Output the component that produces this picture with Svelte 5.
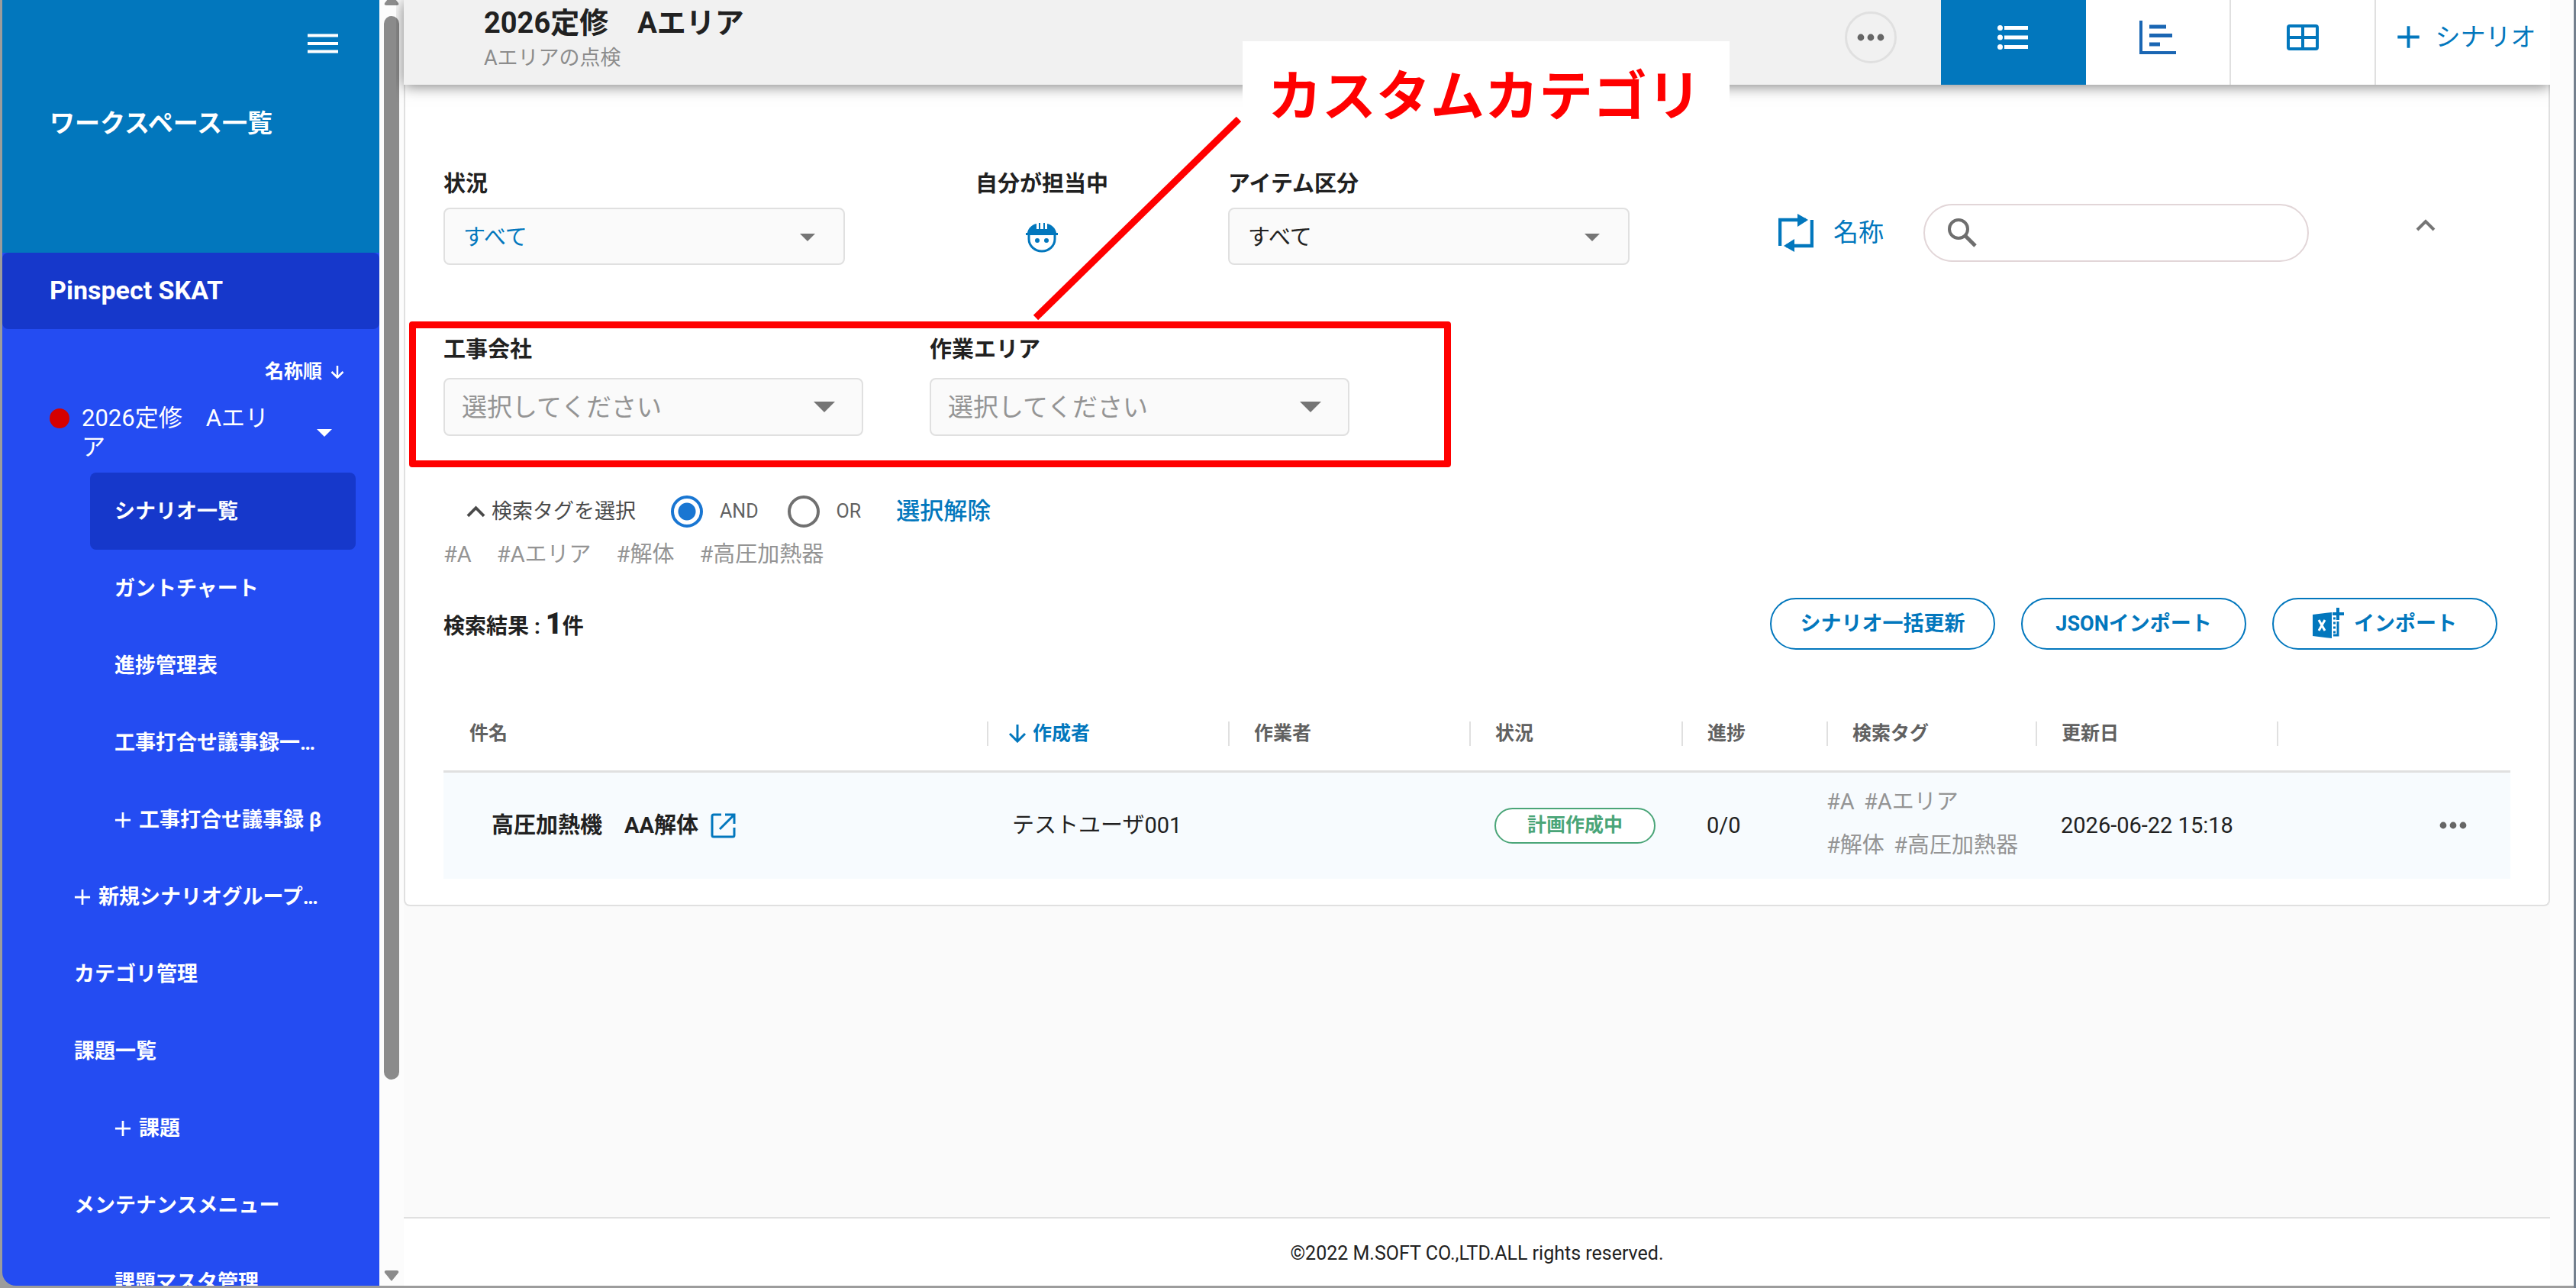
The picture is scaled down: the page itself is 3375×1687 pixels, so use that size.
<script>
  /** Sidebar entries below the selected scenario group */
  const menuItems = [
    { label: 'シナリオ一覧', level: 2, active: true },
    { label: 'ガントチャート', level: 2 },
    { label: '進捗管理表', level: 2 },
    { label: '工事打合せ議事録一…', level: 2 },
    { label: '工事打合せ議事録 β', level: 2, add: true },
    { label: '新規シナリオグループ…', level: 1, add: true },
    { label: 'カテゴリ管理', level: 1 },
    { label: '課題一覧', level: 1 },
    { label: '課題', level: 2, add: true },
    { label: 'メンテナンスメニュー', level: 1 },
    { label: '課題マスタ管理', level: 2 },
  ];

  const customCategories = [
    { id: 'company', label: '工事会社' },
    { id: 'area', label: '作業エリア' },
  ];

  const tags = ['#A', '#Aエリア', '#解体', '#高圧加熱器'];

  const rows = [
    {
      name: '高圧加熱機　AA解体',
      author: 'テストユーザ001',
      worker: '',
      status: '計画作成中',
      progress: '0/0',
      tags,
      updated: '2026-06-22 15:18',
    },
  ];

  let tagMode = $state('and');
  let keyword = $state('');
</script>

{#snippet plus()}
  <svg class="plus" viewBox="0 0 24 24" aria-hidden="true">
    <path d="M12 1v22M1 12h22" fill="none" stroke="currentColor" stroke-width="3" />
  </svg>
{/snippet}

{#snippet caret()}
  <svg class="caret" viewBox="0 0 20 10" aria-hidden="true">
    <path d="M0 0h20L10 10z" fill="currentColor" />
  </svg>
{/snippet}

{#snippet dots()}
  <svg class="dots" viewBox="0 0 36 10" aria-hidden="true">
    <circle cx="5" cy="5" r="4.4" fill="currentColor" />
    <circle cx="18" cy="5" r="4.4" fill="currentColor" />
    <circle cx="31" cy="5" r="4.4" fill="currentColor" />
  </svg>
{/snippet}

<div class="page">
  <aside class="sidebar">
    <div class="workspace">
      <button type="button" class="menu-button" aria-label="メニュー">
        <svg viewBox="0 0 40 26" aria-hidden="true">
          <path d="M0 2.5h40M0 13h40M0 23.5h40" stroke="currentColor" stroke-width="4" />
        </svg>
      </button>
      <a href="#workspaces">ワークスペース一覧</a>
    </div>

    <a class="project" href="#project">Pinspect SKAT</a>

    <button type="button" class="sort">
      名称順
      <svg viewBox="0 0 18 18" aria-hidden="true">
        <path d="M9 1v15M1.500 9l7.500 7.500L16.500 9" fill="none" stroke="currentColor" stroke-width="2.500" />
      </svg>
    </button>

    <button type="button" class="group">
      <span class="group-dot"></span>
      <span class="group-name">2026定修　Aエリア</span>
      {@render caret()}
    </button>

    <nav>
      {#each menuItems as item}
        <a href="#menu" class="item level-{item.level}" class:active={item.active}>
          {#if item.add}{@render plus()}{/if}
          <span>{item.label}</span>
        </a>
      {/each}
    </nav>
  </aside>

  <div class="scrollbar" aria-hidden="true">
    <svg viewBox="0 0 20 14"><path d="M10 0l9 11q1 3-2 3H3q-3 0-2-3z" /></svg>
    <div class="thumb"></div>
    <svg viewBox="0 0 20 14"><path d="M10 14L1 3q-1-3 2-3h14q3 0 2 3z" /></svg>
  </div>

  <div class="main">
    <header>
      <div class="title">
        <h1>2026定修　Aエリア</h1>
        <p>Aエリアの点検</p>
      </div>
      <button type="button" class="more" aria-label="その他">{@render dots()}</button>
      <div class="views">
        <button type="button" class="view selected" aria-label="リスト">
          <svg width="40" height="34" viewBox="0 0 40 34" aria-hidden="true">
            <path d="M9 4.500h31M9 17h31M9 29.500h31" stroke="currentColor" stroke-width="5" />
            <g fill="currentColor">
              <circle cx="3.500" cy="4.500" r="3.500" />
              <circle cx="3.500" cy="17" r="3.500" />
              <circle cx="3.500" cy="29.500" r="3.500" />
            </g>
          </svg>
        </button>
        <button type="button" class="view" aria-label="ガントチャート">
          <svg class="gantt" width="48" height="44" viewBox="0 0 48 44" aria-hidden="true">
            <path d="M2 0v42h46" fill="none" stroke="currentColor" stroke-width="4" />
            <path d="M13 8h22M13 19.500h30M13 31h14" stroke="currentColor" stroke-width="5" />
          </svg>
        </button>
        <button type="button" class="view" aria-label="表">
          <svg width="42" height="34" viewBox="0 0 42 34" aria-hidden="true">
            <rect x="2" y="2" width="38" height="30" rx="2" fill="none" stroke="currentColor" stroke-width="4" />
            <path d="M21 2v30M2 17h38" stroke="currentColor" stroke-width="4" />
          </svg>
        </button>
        <button type="button" class="view add">
          {@render plus()}
          シナリオ
        </button>
      </div>
    </header>

    <main class="card">
      <section class="filters">
        <div class="field">
          <label for="status">状況</label>
          <div class="select">
            <select id="status" class="primary"><option>すべて</option></select>
            {@render caret()}
          </div>
        </div>

        <div class="mine">
          <span class="label">自分が担当中</span>
          <button type="button" aria-label="自分が担当中">
            <svg width="42" height="40" viewBox="0 0 42 40" aria-hidden="true">
              <path d="M4 16v6a17 16 0 0 0 34 0v-6" fill="none" stroke="currentColor" stroke-width="3" />
              <path d="M0 14h2C3 8 8 3 14 2v7h3V1h2v8h4V1h2v8h3V2c6 1 11 6 12 12h2v3H0z" fill="currentColor" />
              <circle cx="15" cy="24" r="3" fill="currentColor" />
              <circle cx="27" cy="24" r="3" fill="currentColor" />
            </svg>
          </button>
        </div>

        <div class="field">
          <label for="kind">アイテム区分</label>
          <div class="select">
            <select id="kind"><option>すべて</option></select>
            {@render caret()}
          </div>
        </div>

        <div class="search">
          <button type="button" class="swap">
            <svg width="46" height="50" viewBox="0 0 46 50" aria-hidden="true">
              <path d="M2 42V8h34M44 8v34H10" fill="none" stroke="currentColor" stroke-width="4.500" />
              <path d="M25 0l14 8-14 9zM21 33L7 42l14 8z" fill="currentColor" />
            </svg>
            名称
          </button>
          <div class="search-box">
            <svg width="38" height="38" viewBox="0 0 38 38" aria-hidden="true">
              <circle cx="14" cy="14" r="12" fill="none" stroke="currentColor" stroke-width="4" />
              <path d="M22 22l14 14" stroke="currentColor" stroke-width="5" />
            </svg>
            <input type="search" aria-label="名称で検索" bind:value={keyword} />
          </div>
          <button type="button" class="collapse" aria-label="閉じる">
            <svg width="26" height="16" viewBox="0 0 26 16" aria-hidden="true">
              <path d="M2 14L13 3l11 11" fill="none" stroke="currentColor" stroke-width="4" />
            </svg>
          </button>
        </div>
      </section>

      <section class="custom">
        {#each customCategories as category}
          <div class="field">
            <label for={category.id}>{category.label}</label>
            <div class="select">
              <select id={category.id} class="empty"><option>選択してください</option></select>
              {@render caret()}
            </div>
          </div>
        {/each}

        <!-- callout naming the framed fields -->
        <svg class="pointer" viewBox="0 0 276 270" aria-hidden="true">
          <path d="M5 265L271 5" stroke="#f00" stroke-width="9" />
        </svg>
        <strong class="callout">カスタムカテゴリ</strong>
      </section>

      <section class="tag-filter">
        <button type="button" class="toggle">
          <svg width="25" height="16" viewBox="0 0 26 16" aria-hidden="true">
            <path d="M2 14L13 3l11 11" fill="none" stroke="currentColor" stroke-width="4" />
          </svg>
          検索タグを選択
        </button>
        <label><input type="radio" value="and" bind:group={tagMode} />AND</label>
        <label><input type="radio" value="or" bind:group={tagMode} />OR</label>
        <button type="button" class="clear">選択解除</button>
      </section>

      <div class="tags">
        {#each tags as tag}
          <span>{tag}</span>
        {/each}
      </div>

      <section class="result">
        <p>検索結果 : <b>{rows.length}</b>件</p>
        <div class="actions">
          <button type="button">シナリオ一括更新</button>
          <button type="button">JSONインポート</button>
          <button type="button">
            <svg width="42" height="42" viewBox="0 0 42 42" aria-hidden="true">
              <path d="M0 9l25-3v34L0 37z" fill="currentColor" />
              <path d="M8 16l8 14M16 16L8 30" stroke="#fff" stroke-width="3" />
              <path d="M33 0v16M26 8h15" stroke="currentColor" stroke-width="4" />
              <path d="M27 14h3M27 20h3M27 26h3M27 32h3" stroke="currentColor" stroke-width="3" />
              <path d="M33 18v18h-6" fill="none" stroke="currentColor" stroke-width="3" />
            </svg>
            インポート
          </button>
        </div>
      </section>

      <table>
        <colgroup>
          <col class="c-name" />
          <col class="c-person" />
          <col class="c-person" />
          <col class="c-status" />
          <col class="c-progress" />
          <col class="c-tags" />
          <col class="c-date" />
          <col />
        </colgroup>
        <thead>
          <tr>
            <th><span>件名</span></th>
            <th class="sorted">
              <span>
                <svg width="24" height="24" viewBox="0 0 24 24" aria-hidden="true">
                  <path d="M12 0v22M2 12l10 10 10-10" fill="none" stroke="currentColor" stroke-width="3" />
                </svg>
                作成者
              </span>
            </th>
            <th><span>作業者</span></th>
            <th><span>状況</span></th>
            <th><span>進捗</span></th>
            <th><span>検索タグ</span></th>
            <th><span>更新日</span></th>
            <th><span></span></th>
          </tr>
        </thead>
        <tbody>
          {#each rows as row}
            <tr>
              <td class="name">
                <a href="#scenario">
                  {row.name}
                  <svg width="33" height="33" viewBox="0 0 33 33" aria-hidden="true">
                    <path d="M14 2H4q-2 0-2 2v25q0 2 2 2h25q2 0 2-2V19" fill="none" stroke="currentColor" stroke-width="3" />
                    <path d="M19 2h12v12M31 2L12 21" fill="none" stroke="currentColor" stroke-width="3" />
                  </svg>
                </a>
              </td>
              <td>{row.author}</td>
              <td>{row.worker}</td>
              <td><span class="badge">{row.status}</span></td>
              <td>{row.progress}</td>
              <td class="row-tags">
                {#each row.tags as tag}<span>{tag}</span>{' '}{/each}
              </td>
              <td>{row.updated}</td>
              <td class="row-menu">
                <button type="button" aria-label="操作">{@render dots()}</button>
              </td>
            </tr>
          {/each}
        </tbody>
      </table>
    </main>

    <footer>©2022 M.SOFT CO.,LTD.ALL rights reserved.</footer>
  </div>
</div>

<style>
  :global(body) {
    background: #9c9c9c;
  }

  .page {
    --primary: #0277bd;
    --line: #e0e0e0;
    --text: #212121;
    --muted: #949494;
    --icon: #6e6e6e;
    box-sizing: border-box;
    display: flex;
    height: 100vh;
    padding: 0 0 3px 3px;
    border-right: 3px solid #74808e;
    overflow: hidden;
    color: var(--text);
    font-family: Roboto, 'Noto Sans CJK JP', sans-serif;
    font-size: 29px;
    line-height: 40px;
  }

  .page * {
    box-sizing: border-box;
  }

  button,
  input,
  select {
    margin: 0;
    padding: 0;
    border: 0;
    background: none;
    color: inherit;
    font: inherit;
  }

  a {
    color: inherit;
    text-decoration: none;
  }

  h1,
  p {
    margin: 0;
  }

  svg {
    flex-shrink: 0;
  }

  .plus {
    width: 22px;
    height: 22px;
  }

  .caret {
    width: 20px;
    height: 10px;
  }

  .dots {
    display: block;
    width: 36px;
    height: 10px;
    color: #666;
  }

  /* Sidebar */
  .sidebar {
    flex: 0 0 494px;
    overflow: hidden;
    border-bottom-left-radius: 18px;
    background: #244cf2;
    color: #fff;
    font-size: 27px;
    font-weight: 700;
  }

  .workspace {
    display: flex;
    flex-direction: column;
    height: 331px;
    padding: 44px 54px 0 62px;
    background: var(--primary);
    font-size: 33px;
  }

  .menu-button {
    align-self: flex-end;
    width: 40px;
    height: 26px;
    margin-bottom: 72px;
  }

  .menu-button svg {
    display: block;
  }

  .project {
    display: flex;
    align-items: center;
    height: 100px;
    padding: 0 62px 2px;
    border-radius: 8px;
    background: #1638cb;
    font-size: 34px;
  }

  .sort {
    display: flex;
    align-items: center;
    gap: 11px;
    margin: 36px 46px 0 auto;
    font-size: 25px;
  }

  .sort svg {
    width: 18px;
    height: 18px;
  }

  .group {
    display: flex;
    align-items: center;
    width: 100%;
    margin: 22px 0 14px;
    padding: 0 62px;
    font-size: 31px;
    font-weight: 400;
    line-height: 38px;
    text-align: left;
  }

  .group-dot {
    align-self: flex-start;
    width: 26px;
    height: 26px;
    margin: 6px 16px 0 0;
    border-radius: 50%;
    background: #d50000;
  }

  .group-name {
    flex: 0 0 256px;
    margin-right: auto;
  }

  .item {
    display: flex;
    align-items: center;
    gap: 10px;
    height: 101px;
    white-space: nowrap;
  }

  .level-1 {
    padding-left: 94px;
  }

  .level-2 {
    margin: 0 31px 0 115px;
    padding-left: 32px;
  }

  .active {
    border-radius: 8px;
    background: #1638cb;
  }

  .scrollbar {
    display: flex;
    flex: 0 0 32px;
    flex-direction: column;
    align-items: center;
    justify-content: space-between;
    padding-bottom: 6px;
    background: #fcfcfc;
  }

  .scrollbar svg {
    width: 20px;
    height: 14px;
    fill: #8b8b8b;
  }

  .thumb {
    flex: 0 0 83%;
    width: 20px;
    margin: 0 0 auto;
    border-radius: 10px;
    background: #8b8b8b;
  }

  .scrollbar svg:first-child {
    margin: -7px 0 14px;
  }

  /* Main column */
  .main {
    display: flex;
    flex: 1;
    flex-direction: column;
    min-width: 0;
    padding-right: 31px;
    background: linear-gradient(to left, #fcfcfc 31px, #fafafa 31px);
  }

  header {
    z-index: 1;
    display: flex;
    align-items: center;
    height: 111px;
    background: #f1f1f1;
    box-shadow: 0 2px 18px rgba(0, 0, 0, 0.5);
    clip-path: inset(0 0 -30px -10px);
  }

  .title {
    height: 100%;
    padding: 8px 0 0 105px;
  }

  h1 {
    font-size: 38px;
    font-weight: 700;
    line-height: 44px;
  }

  .title p {
    margin-top: 4px;
    color: #8c8c8c;
    font-size: 27px;
  }

  .more {
    display: flex;
    align-items: center;
    justify-content: center;
    width: 68px;
    height: 68px;
    margin: 0 58px 14px auto;
    border: 3px solid var(--line);
    border-radius: 50%;
  }

  .views {
    display: flex;
    height: 100%;
    background: #fff;
    color: var(--primary);
  }

  .view {
    display: flex;
    align-items: center;
    justify-content: center;
    width: 190px;
    padding-bottom: 14px;
    border-right: 2px solid var(--line);
  }

  .view.selected {
    border-color: var(--primary);
    background: var(--primary);
    color: #fff;
  }

  .gantt {
    color: #1a66b3;
  }

  .view.add {
    gap: 20px;
    width: 228px;
    padding-left: 8px;
    border: 0;
    font-size: 33px;
  }

  .add .plus {
    width: 31px;
    height: 31px;
  }

  .card {
    padding: 110px 50px 34px;
    border: 2px solid var(--line);
    border-top: 0;
    border-radius: 0 0 8px 8px;
    background: #fff;
  }

  /* Filters */
  .filters {
    display: flex;
  }

  .field {
    width: 526px;
  }

  .field label,
  .label {
    display: block;
    margin-bottom: 11px;
    font-weight: 700;
  }

  .select {
    position: relative;
  }

  select {
    display: block;
    width: 100%;
    height: 75px;
    padding: 2px 24px 0;
    border: 2px solid var(--line);
    border-radius: 8px;
    background: #fafafa;
    appearance: none;
  }

  .select .caret {
    position: absolute;
    top: 34px;
    right: 39px;
    color: #757575;
    pointer-events: none;
  }

  .primary {
    color: var(--primary);
  }

  .empty {
    padding: 2px 22px 0;
    color: #949494;
    font-size: 33px;
  }

  .mine {
    margin: 0 157px 0 171px;
    text-align: center;
  }

  .mine button {
    display: block;
    margin: 30px auto 0;
    color: var(--primary);
  }

  .search {
    display: flex;
    align-items: flex-start;
    margin: 46px 98px 0 auto;
  }

  .swap {
    display: flex;
    align-items: center;
    gap: 26px;
    height: 76px;
    margin-right: 52px;
    color: var(--primary);
    font-size: 33px;
  }

  .search-box {
    display: flex;
    align-items: center;
    width: 505px;
    height: 76px;
    padding: 0 30px;
    border: 2px solid #e2d6d8;
    border-radius: 38px;
    color: var(--icon);
  }

  .search-box input {
    flex: 1;
    min-width: 0;
    padding-left: 16px;
    outline: 0;
  }

  .collapse {
    margin: 20px 0 0 140px;
    color: #757575;
  }

  .collapse svg {
    display: block;
  }

  .custom {
    position: relative;
    display: flex;
    gap: 87px;
    width: fit-content;
    margin: 74px 0 36px -45px;
    padding: 8px 124px 32px 36px;
    border: 9px solid #f00;
    border-radius: 4px;
  }

  .custom .field {
    width: 550px;
  }

  .custom label {
    margin-bottom: 17px;
  }

  .custom select {
    height: 76px;
  }

  .custom .caret {
    top: 31px;
    right: 37px;
    width: 28px;
    height: 14px;
  }

  .pointer {
    position: absolute;
    bottom: 182px;
    left: 807px;
    z-index: 2;
    width: 276px;
    height: 270px;
  }

  .callout {
    position: absolute;
    bottom: 418px;
    left: 1083px;
    z-index: 2;
    padding: 25px 37px 10px 33px;
    background: #fff;
    color: #f00;
    font-size: 71px;
    line-height: 96px;
    white-space: nowrap;
  }

  .tag-filter {
    display: flex;
    align-items: center;
    height: 44px;
    padding-left: 30px;
    color: #616161;
    font-size: 25px;
  }

  .toggle {
    display: flex;
    align-items: center;
    gap: 8px;
    margin-right: 46px;
    color: #4a4a4a;
    font-size: 27px;
  }

  .tag-filter label {
    display: flex;
    align-items: center;
    gap: 22px;
    margin-right: 38px;
  }

  .tag-filter input {
    width: 42px;
    height: 42px;
    border: 4px solid #707070;
    border-radius: 50%;
    appearance: none;
  }

  .tag-filter input:checked {
    border-color: #1976d2;
    background: radial-gradient(circle, #1976d2 11px, transparent 12px);
  }

  .clear {
    margin-left: 8px;
    color: var(--primary);
    font-size: 31px;
    font-weight: 500;
  }

  .tags {
    display: flex;
    gap: 33px;
    margin: 14px 0 37px;
    color: var(--muted);
  }

  .result {
    display: flex;
    align-items: center;
    justify-content: space-between;
    margin-bottom: 63px;
  }

  .result p {
    padding-top: 4px;
    font-size: 28px;
    font-weight: 700;
  }

  .result b {
    font-size: 38px;
  }

  .actions {
    display: flex;
    gap: 34px;
    margin-right: 17px;
  }

  .actions button {
    display: flex;
    align-items: center;
    justify-content: center;
    gap: 12px;
    width: 295px;
    height: 68px;
    border: 2px solid var(--primary);
    border-radius: 34px;
    color: var(--primary);
    font-size: 27px;
    font-weight: 700;
  }

  /* Result table */
  table {
    width: 100%;
    border-collapse: collapse;
    table-layout: fixed;
  }

  .c-name {
    width: 712px;
  }

  .c-person {
    width: 316px;
  }

  .c-status {
    width: 278px;
  }

  .c-progress {
    width: 190px;
  }

  .c-tags {
    width: 274px;
  }

  .c-date {
    width: 316px;
  }

  th {
    height: 96px;
    padding: 0;
    border-bottom: 3px solid var(--line);
    color: #616161;
    font-size: 25px;
    font-weight: 700;
    text-align: left;
  }

  th span {
    display: flex;
    align-items: center;
    gap: 8px;
    height: 32px;
    padding-left: 32px;
    border-left: 2px solid var(--line);
    line-height: 32px;
  }

  th:first-child span {
    border-color: transparent;
  }

  th.sorted span {
    padding-left: 26px;
    color: var(--primary);
  }

  td {
    height: 141px;
    padding: 0 0 0 33px;
    background: #f7fbfe;
  }

  td.name {
    padding-left: 63px;
    font-weight: 700;
  }

  .name a {
    display: flex;
    align-items: center;
    gap: 16px;
  }

  .name svg {
    color: var(--primary);
  }

  .badge {
    display: flex;
    align-items: center;
    justify-content: center;
    width: 211px;
    height: 47px;
    border: 2px solid #4aa578;
    border-radius: 24px;
    background: #fff;
    color: #4aa578;
    font-size: 25px;
    font-weight: 700;
  }

  td.row-tags {
    padding: 0 16px 4px 0;
    color: var(--muted);
    line-height: 57px;
  }

  .row-tags span {
    margin-right: 5px;
    white-space: nowrap;
  }

  .row-menu button {
    display: block;
    margin: 0 57px 0 auto;
  }

  footer {
    display: flex;
    align-items: center;
    justify-content: center;
    height: 90px;
    padding-top: 4px;
    margin-top: auto;
    border-top: 2px solid var(--line);
    background: #fff;
    font-size: 25px;
  }
</style>
